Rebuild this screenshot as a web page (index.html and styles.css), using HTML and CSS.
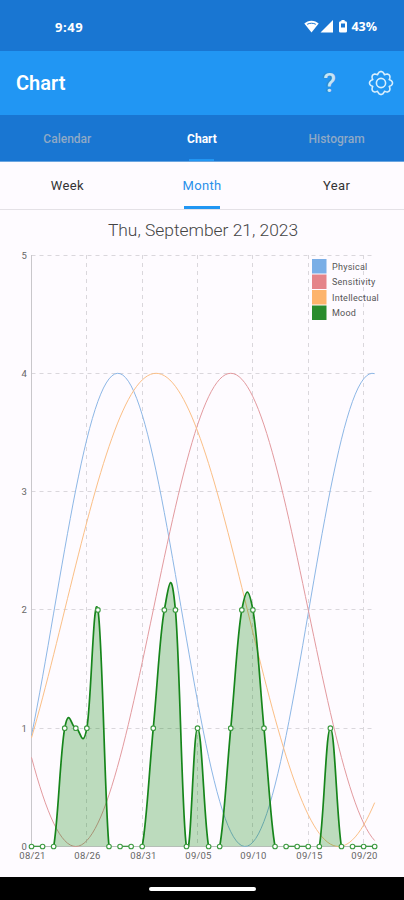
FILE: index.html
```html
<!DOCTYPE html>
<html lang="en">
<head>
  <meta charset="utf-8">
  <title>Chart</title>
  <link rel="stylesheet" href="styles.css">
</head>
<body>

  <div class="status-bar">
    <span class="time">9:49</span>
    <div class="status-icons">
      <svg class="wifi" width="15" height="13" viewBox="0 0 15 13">
        <path d="M0.3 3.6 C4 -0.3 11 -0.3 14.7 3.6 L7.5 12.5 Z" fill="#fff"/>
        <path d="M3.2 4.3 C5.5 2.9 9.5 2.9 11.8 4.3" fill="none" stroke="#1976d2" stroke-width="1"/>
      </svg>
      <svg class="signal" width="13" height="13" viewBox="0 0 13 13">
        <path d="M13 0 V12.5 H0.5 Z" fill="#fff"/>
      </svg>
      <svg class="battery" width="8" height="13" viewBox="0 0 8 13">
        <path d="M2.4 0 H5.6 V1.2 H6.5 Q8 1.2 8 2.7 V11.2 Q8 12.6 6.5 12.6 H1.5 Q0 12.6 0 11.2 V2.7 Q0 1.2 1.5 1.2 H2.4 Z" fill="#fff"/>
        <rect x="2" y="3.5" width="4" height="4" fill="#1976d2"/>
      </svg>
      <span>43%</span>
    </div>
  </div>

  <div class="toolbar">
    <h1>Chart</h1>
    <span class="help">?</span>
    <svg class="gear" id="gear" width="26" height="26" viewBox="-13 -13 26 26">
      <path id="gear-path"/>
      <circle r="4.6"/>
    </svg>
  </div>

  <div class="tabs">
    <div class="tab">Calendar</div>
    <div class="tab active">Chart</div>
    <div class="tab">Histogram</div>
  </div>

  <div class="periods">
    <div class="period">Week</div>
    <div class="period active">Month</div>
    <div class="period">Year</div>
  </div>

  <h2 class="date">Thu, September 21, 2023</h2>

  <svg class="chart" id="chart" width="404" height="627" viewBox="0 250 404 627"></svg>

  <div class="nav-bar"><div class="handle"></div></div>

  <script src="script.js"></script>
</body>
</html>
```
FILE: styles.css
```css
body {
  margin: 0;
  width: 404px;
  height: 900px;
  display: flex;
  flex-direction: column;
  overflow: hidden;
  font-family: Roboto, "Liberation Sans", sans-serif;
  background-color: #fefbff;
}

.status-bar {
  display: flex;
  justify-content: space-between;
  align-items: center;
  box-sizing: border-box;
  height: 51px;
  padding: 2px 27px 0 55px;
  background-color: #1976d2;
  color: #fff;
  font-family: "Open Sans", sans-serif;
  font-size: 12.5px;
  font-weight: 700;
}

.time {
  font-size: 13px;
  letter-spacing: 0.6px;
}

.status-icons {
  display: flex;
  align-items: center;
}

.signal {
  margin-left: 1px;
}

.battery {
  margin: 0 4px 0 6px;
}

.toolbar {
  display: flex;
  align-items: center;
  box-sizing: border-box;
  height: 64px;
  padding: 0 10px 0 16px;
  background-color: #2196f3;
  color: #fff;
}

.toolbar h1 {
  flex: 1;
  margin: 0;
  font-size: 20px;
  font-weight: 600;
}

.help {
  margin-right: 32px;
  color: #c5e4f5;
  font-size: 26px;
  font-weight: 500;
  text-shadow: -1px 0 1px #3c78a0;
}

.gear {
  fill: none;
  stroke: #d9effd;
  stroke-width: 1.6;
  stroke-linejoin: round;
}

.tabs,
.periods {
  display: grid;
  grid-template-columns: 1fr 1fr 1fr;
  box-sizing: border-box;
}

.tabs {
  height: 47px;
  border-bottom: 1px solid #6aa5e0;
  background-color: #1976d2;
}

.tab,
.period {
  display: flex;
  flex-direction: column;
  align-items: center;
  justify-content: center;
}

.tab {
  color: #8fa9c6;
  font-size: 12px;
  font-weight: 500;
  padding-top: 1px;
}

.tab.active {
  color: #fff;
  font-weight: 700;
  background: linear-gradient(#2196f3, #2196f3) center bottom / 25px 2px no-repeat;
}

.periods {
  height: 48px;
  border-bottom: 1px solid #e4e1e6;
}

.period {
  color: #333;
  font-size: 13px;
  font-weight: 400;
  letter-spacing: 0.35px;
}

.period.active {
  color: #2990ea;
  background: linear-gradient(#2196f3, #2196f3) center bottom / 36px 3px no-repeat;
}

.date {
  margin: 0;
  padding-left: 2px;
  height: 40px;
  line-height: 40px;
  text-align: center;
  color: #444;
  font-size: 17.4px;
  font-weight: 350;
}

.chart {
  display: block;
  flex: none;
}

.grid {
  stroke: #dad7dc;
  stroke-width: 1;
  stroke-dasharray: 4 4;
}

.axis {
  stroke: #c9c7cb;
  stroke-width: 1;
}

.label {
  fill: #666;
  font-size: 9.5px;
  letter-spacing: 0.2px;
}

.legend {
  fill: #555;
  font-size: 9px;
  letter-spacing: 0.25px;
}

.wave {
  fill: none;
  stroke-width: 1;
}

.mood-area {
  fill: #007f00;
  fill-opacity: 0.26;
}

.mood-line {
  fill: none;
  stroke: #16851b;
  stroke-width: 1.7;
}

.dot {
  fill: #fff;
  stroke: #3d9a41;
  stroke-width: 1.1;
}

.nav-bar {
  display: flex;
  justify-content: center;
  align-items: center;
  flex: 1;
  background-color: #000;
}

.handle {
  width: 107px;
  height: 4px;
  border-radius: 2px;
  background-color: #fff;
}
```
FILE: script.js
```js
const chart = document.getElementById('chart');
const left = 31.5;
const bottom = 846.5;
const dayWidth = 11.07;
const unit = 118.3;

const mood = [0, 0, 0, 1, 1, 1, 2, 0, 0, 0, 0, 1, 2, 2, 0, 1,
              0, 0, 1, 2, 2, 1, 0, 0, 0, 0, 0, 1, 0, 0, 0, 0];

const waves = [
  { peak: 7.8, period: 23, color: '#8db7e6' },
  { peak: 18, period: 28, color: '#e39a9f' },
  { peak: 11.25, period: 33, color: '#fbbf86' }
];

const legend = [
  ['Physical', '#7aaee6'],
  ['Sensitivity', '#e58489'],
  ['Intellectual', '#fdb46c'],
  ['Mood', '#2a8c2d']
];

const px = day => left + day * dayWidth;
const py = value => bottom - value * unit;

function add(name, attrs, text) {
  const el = document.createElementNS('http://www.w3.org/2000/svg', name);
  for (const key in attrs) el.setAttribute(key, attrs[key]);
  if (text) el.textContent = text;
  chart.appendChild(el);
  return el;
}

// grid and labels
for (let i = 0; i <= 5; i++) {
  const y = Math.floor(py(i)) + 0.5;
  if (i > 0) add('line', { class: 'grid', x1: left, x2: px(31), y1: y, y2: y });
  add('text', { class: 'label', x: 27, y: y + 3, 'text-anchor': 'end' }, String(i));
}
['08/21', '08/26', '08/31', '09/05', '09/10', '09/15', '09/20'].forEach((date, i) => {
  const x = Math.floor(px(i * 5)) + 0.5;
  if (i > 0) add('line', { class: 'grid', x1: x, x2: x, y1: py(5), y2: bottom });
  add('text', { class: 'label', x: x + 1, y: 859, 'text-anchor': 'middle' }, date);
});
add('line', { class: 'axis', x1: left, x2: left, y1: py(5), y2: bottom });
add('line', { class: 'axis', x1: left, x2: px(31), y1: bottom, y2: bottom });

// biorhythm waves
waves.forEach(w => {
  const points = [];
  for (let d = 0; d <= 31; d += 0.25) {
    const v = 2 + 2 * Math.cos(2 * Math.PI * (d - w.peak) / w.period);
    points.push(px(d).toFixed(2) + ',' + py(v).toFixed(2));
  }
  add('polyline', { class: 'wave', points: points.join(' '), stroke: w.color });
});

// mood, smoothed with cubic segments
const last = mood.length - 1;
let path = `M${px(0)} ${py(mood[0])}`;
for (let i = 1; i <= last; i++) {
  const a = Math.max(i - 2, 0);
  const b = Math.min(i + 1, last);
  path += ` C${px(i - 1 + (i - a) * 0.2)} ${py(mood[i - 1] + (mood[i] - mood[a]) * 0.2)}`;
  path += ` ${px(i - (b - i + 1) * 0.2)} ${py(mood[i] - (mood[b] - mood[i - 1]) * 0.2)}`;
  path += ` ${px(i)} ${py(mood[i])}`;
}
const clip = add('clipPath', { id: 'plot' });
clip.appendChild(add('rect', { x: left, y: py(5), width: 31 * dayWidth, height: 5 * unit + 0.2 }));
add('path', { class: 'mood-area', d: path + ' Z', 'clip-path': 'url(#plot)' });
add('path', { class: 'mood-line', d: path, 'clip-path': 'url(#plot)' });
mood.forEach((v, i) => add('circle', { class: 'dot', cx: px(i), cy: py(v), r: 2.3 }));

legend.forEach(([name, color], i) => {
  const y = 259 + i * 15.5;
  add('rect', { x: 312, y: y, width: 14.5, height: 14.5, fill: color });
  add('text', { class: 'legend', x: 332, y: y + 10.5 }, name);
});

// settings icon, eight rounded teeth
let gear = '';
for (let i = 0; i <= 96; i++) {
  const t = i / 96 * 2 * Math.PI;
  const r = 8.9 + 2.6 * Math.abs(Math.cos(4 * t));
  gear += (i ? 'L' : 'M') + (r * Math.cos(t)).toFixed(2) + ' ' + (r * Math.sin(t)).toFixed(2);
}
document.getElementById('gear-path').setAttribute('d', gear + 'Z');
```
